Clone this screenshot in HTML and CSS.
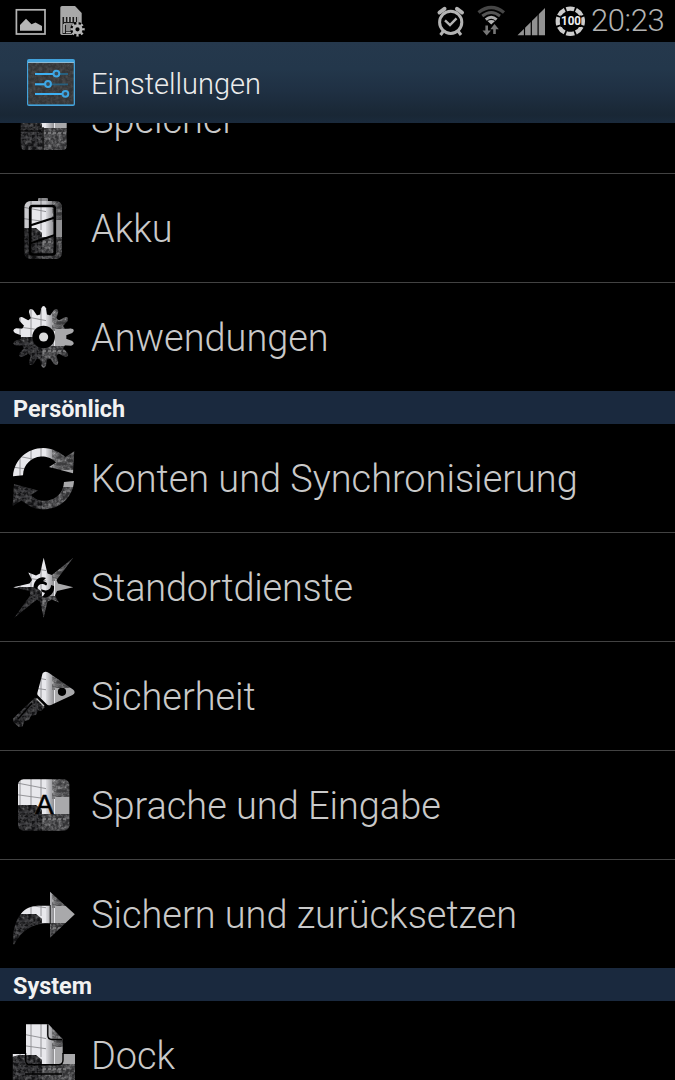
FILE: index.html
```html
<!DOCTYPE html>
<html lang="de">
<head>
    <meta charset="UTF-8">
    <meta name="viewport" content="width=device-width, initial-scale=1.0">
    <title>Einstellungen</title>
    <link rel="stylesheet" href="styles.css">
</head>
<body>
    <!-- Shared photo texture and the icon masks -->
    <svg class="defs" width="0" height="0" aria-hidden="true">
        <defs>
            <filter id="grain" x="0" y="0" width="100%" height="100%" color-interpolation-filters="sRGB">
                <feTurbulence type="fractalNoise" baseFrequency="0.3" numOctaves="3" seed="4" result="noise"/>
                <feColorMatrix in="noise" type="matrix" values="1.8 0 0 0 -0.62  1.8 0 0 0 -0.62  1.8 0 0 0 -0.62  0 0 0 0 0.35" result="gray"/>
                <feComposite in="gray" in2="SourceGraphic" operator="in" result="cut"/>
                <feMerge>
                    <feMergeNode in="SourceGraphic"/>
                    <feMergeNode in="cut"/>
                </feMerge>
            </filter>
            <linearGradient id="wall" x1="0" x2="1" y1="0" y2="0">
                <stop offset="0" stop-color="#a0a0a3"/>
                <stop offset="0.25" stop-color="#636366"/>
                <stop offset="1" stop-color="#4c4c4e"/>
            </linearGradient>
            <linearGradient id="pane" x1="0" x2="1" y1="0" y2="0">
                <stop offset="0" stop-color="#dcdce0"/>
                <stop offset="1" stop-color="#8e8e91"/>
            </linearGradient>
            <g id="photo">
                <rect width="64" height="64" fill="#e8e8ec"/>
                <path d="M8 0V34M19 0V34M29 0V34M0 9L36 16M0 21L36 26" stroke="#8b8b8f" stroke-width="0.9" fill="none"/>
                <rect x="34" width="8" height="44" fill="url(#pane)"/>
                <g filter="url(#grain)">
                    <rect x="40" width="24" height="26" fill="url(#wall)"/>
                    <rect x="26" y="41" width="38" height="23" fill="#4e4e50"/>
                    <path d="M0 34L7 32H24L30 37V64H0Z" fill="#1c1d1f"/>
                </g>
                <rect x="43" y="24" width="21" height="17" fill="#a9a9ab"/>
                <path d="M3 39H20M3 45H20M3 51H20M24 38V60" stroke="#47474b" stroke-width="1"/>
                <path d="M31 46H54" stroke="#858587" stroke-width="1.4" stroke-dasharray="3 2"/>
            </g>
            <mask id="m-storage" maskUnits="userSpaceOnUse" x="0" y="0" width="64" height="64">
                <rect x="8.7" y="8" width="46" height="55" rx="4" fill="#fff"/>
                <path d="M31 40V64M8 44H29" stroke="#000" stroke-width="1.2"/>
            </mask>
            <mask id="m-battery" maskUnits="userSpaceOnUse" x="0" y="0" width="64" height="64">
                <rect x="26" y="2" width="10" height="5" rx="1" fill="#999"/>
                <rect x="12.4" y="5" width="37.6" height="58" rx="6" fill="#ddd"/>
                <rect x="18.2" y="10" width="24.6" height="48.5" rx="2.5" fill="#fff" stroke="#000" stroke-width="2.7"/>
                <path d="M18 29.5L43 21.5M18 47.5L43 39" stroke="#000" stroke-width="2.3"/>
            </mask>
            <mask id="m-gear" maskUnits="userSpaceOnUse" x="0" y="0" width="64" height="64">
                <g fill="#fff">
                    <circle cx="31.6" cy="32" r="22.8"/>
                    <path id="tooth" d="M28 11L29.2 3.2Q31.6 -1 34 3.2L35.2 11Z"/>
                    <use href="#tooth" transform="rotate(25.71 31.6 32)"/>
                    <use href="#tooth" transform="rotate(51.43 31.6 32)"/>
                    <use href="#tooth" transform="rotate(77.14 31.6 32)"/>
                    <use href="#tooth" transform="rotate(102.86 31.6 32)"/>
                    <use href="#tooth" transform="rotate(128.57 31.6 32)"/>
                    <use href="#tooth" transform="rotate(154.29 31.6 32)"/>
                    <use href="#tooth" transform="rotate(180 31.6 32)"/>
                    <use href="#tooth" transform="rotate(205.71 31.6 32)"/>
                    <use href="#tooth" transform="rotate(231.43 31.6 32)"/>
                    <use href="#tooth" transform="rotate(257.14 31.6 32)"/>
                    <use href="#tooth" transform="rotate(282.86 31.6 32)"/>
                    <use href="#tooth" transform="rotate(308.57 31.6 32)"/>
                    <use href="#tooth" transform="rotate(334.29 31.6 32)"/>
                </g>
                <circle cx="31.6" cy="32" r="11.3" fill="#000"/>
            </mask>
            <mask id="m-sync" maskUnits="userSpaceOnUse" x="0" y="0" width="64" height="64">
                <path id="sync-arrow" d="M1 30.3C2 14 15 2 31.3 2C40 2 47.5 6 53.5 11L62.3 5.3L61 27.3L37 21L44 16.5C39 11.5 34 10.4 29 10.6C19 11.5 11.5 18.5 11 29.3Z" fill="#fff"/>
                <use href="#sync-arrow" transform="rotate(180 31.5 32.7)"/>
            </mask>
            <mask id="m-compass" maskUnits="userSpaceOnUse" x="0" y="0" width="64" height="64">
                <path d="M31.7 2.7L35.5 18.5L40 20L61.3 2.7L44.5 25L46 28.5L61.3 32.3L45 36L43 40.5L46.8 47.5L40 44.5L35.5 46.5L31.7 62.7L28 46.5L25 44.5L2.3 62.7L18.5 40L17.5 36L1.3 32.3L17.5 28.5L20 25L16.3 17.5L24 20.5L28 18.5Z" fill="#fff"/>
                <circle cx="31.7" cy="32" r="13" fill="#fff"/>
                <path d="M21.5 32C22 24 29 20.5 34 23L31 26C35 27 36 29 34 30.5C29 27 25 30 25.5 35ZM42 31C43 39 36 44 30.5 42L33 38C30 37 28.5 36 29.5 34C34 37 39 35 39 30Z" fill="#000"/>
            </mask>
            <mask id="m-key" maskUnits="userSpaceOnUse" x="0" y="0" width="64" height="64">
                <path d="M30.5 9.5Q32.5 6.5 37 9L61 25.5Q64.5 28.5 60.5 31L38.5 41.3Q36.5 42.3 35 40.5L26 31.5Q25 30.4 25.4 28.8Z" fill="#fff"/>
                <circle cx="50" cy="27.8" r="4.1" fill="#000"/>
                <path d="M23 33.5L32.8 43L29 47L26 46.5L24 51L19 51.5L17 56L12.5 57L10.5 62.5L6.5 63L1 57.5V54.5Z" fill="#fff"/>
            </mask>
            <mask id="m-lang" maskUnits="userSpaceOnUse" x="0" y="0" width="64" height="64">
                <rect x="6" y="6.3" width="51.4" height="51.4" rx="5.5" fill="#fff"/>
            </mask>
            <mask id="m-reset" maskUnits="userSpaceOnUse" x="0" y="0" width="64" height="64">
                <path d="M38 9.7L62.8 32.3L38 55.8V41.5C20 41 10 48 2.2 62.5L1.2 62V52C4 34 12 24 26 23.7H38Z" fill="#fff"/>
                <path d="M38.2 23V42" stroke="#000" stroke-width="0.9"/>
            </mask>
            <mask id="m-dock" maskUnits="userSpaceOnUse" x="0" y="0" width="64" height="64">
                <rect x="0.8" y="31" width="62.2" height="33" fill="#fff"/>
                <path d="M14 1.3H36.5L50.7 16V38Q50.7 41.5 47 41.5H17.5Q14 41.5 14 38Z" fill="#fff"/>
                <path d="M13.6 30V37Q13.6 41.8 18 41.8H46.5Q51 41.8 51 37V30M35.8 1.3V12Q35.8 16.5 40 16.5H50M13 51H50" fill="none" stroke="#000" stroke-width="1.4"/>
            </mask>
        </defs>
    </svg>

    <!-- Status bar -->
    <div class="status-bar">
        <svg class="status-icons" width="90" height="42" viewBox="0 0 90 42">
            <rect x="16.4" y="9.8" width="28.6" height="24.2" fill="none" stroke="#b5b5b5" stroke-width="1.7"/>
            <path d="M20 30.7V25L26 18.7L31.5 24.2L35.5 22.5L42 26V30.7Z" fill="#b5b5b5"/>
            <path d="M62 6H75L81.7 13V35H62Q60.3 35 60.3 33.3V7.7Q60.3 6 62 6Z" fill="#a8a8a8"/>
            <path d="M62.5 17H79V34H62.5Z" fill="#1a1a1a"/>
            <path d="M65 17V22M68.3 17V22M71.6 17V22M75 17V22M78 17V22M64 24V33M64 24H79M66 32.5H72" stroke="#b5b5b5" stroke-width="1.7"/>
            <path d="M66 25H73V31H66Z" fill="#8c8c8c"/>
            <circle cx="77.5" cy="29.3" r="7.4" fill="#000"/>
            <circle cx="77.5" cy="29.3" r="3.6" fill="none" stroke="#b5b5b5" stroke-width="3"/>
            <circle cx="77.5" cy="29.3" r="5.8" fill="none" stroke="#b5b5b5" stroke-width="2.8" pathLength="16" stroke-dasharray="1 1" stroke-dashoffset="0.5"/>
        </svg>
        <div class="status-right">
            <svg width="156" height="42" viewBox="435 0 156 42">
                <circle cx="450.7" cy="22.3" r="11.1" fill="none" stroke="#b3b3b3" stroke-width="3"/>
                <path d="M445 20.3L450 25L456.5 18.3" fill="none" stroke="#b3b3b3" stroke-width="2.4"/>
                <path d="M439.5 12.5L444.5 8.8M462 12.5L457 8.8" stroke="#b3b3b3" stroke-width="4" stroke-linecap="round"/>
                <path d="M443.5 31L440.5 35M458 31L461 35" stroke="#b3b3b3" stroke-width="3"/>
                <path d="M478.5 12.5Q491.2 2.5 504 12.5" fill="none" stroke="#464646" stroke-width="3.3"/>
                <path d="M482.3 16Q491.2 9 500 16" fill="none" stroke="#555" stroke-width="3"/>
                <path d="M485.8 19.6Q491.2 15 496.6 19.6" fill="none" stroke="#aaa" stroke-width="3"/>
                <path d="M487.5 21Q491.2 18.8 495 21L491.2 24.5Z" fill="#b5b5b5"/>
                <path d="M486.7 25.5V32M494.5 34V28" stroke="#777" stroke-width="2.6"/>
                <path d="M482.5 30.5H491L486.7 35.5ZM490.3 29.3H498.8L494.5 24Z" fill="#777"/>
                <path d="M517.5 35.3L545 8V35.3Z" fill="#929292"/>
                <path d="M524.5 26V36M531.3 20V36M538.1 13V36" stroke="#000" stroke-width="1.2"/>
                <circle cx="570.3" cy="21.2" r="12.6" fill="none" stroke="#ccc" stroke-width="4.2" pathLength="16" stroke-dasharray="1.65 0.35" stroke-dashoffset="0.82"/>
                <rect x="560.5" y="15.5" width="20.8" height="11.5" fill="#000"/>
                <text class="battery-level" x="571" y="25.3" text-anchor="middle" textLength="20" lengthAdjust="spacingAndGlyphs">100</text>
            </svg>
            <span class="clock">20:23</span>
        </div>
    </div>

    <!-- Title bar -->
    <div class="header">
        <svg class="header-icon" width="50" height="50" viewBox="0 0 50 50">
            <rect x="1" y="1" width="48" height="47" rx="2" fill="#43a3dc"/>
            <rect x="2.2" y="5" width="45.4" height="41.3" fill="#3b3c3e"/>
            <rect x="2.2" y="5" width="45.4" height="41.3" fill="#3b3c3e" filter="url(#grain)" opacity="0.3"/>
            <path d="M2 4.5H48" stroke="#a3c0cf" stroke-width="0.8"/>
            <path d="M9 16H42M9 26.3H42" stroke="#28607f" stroke-width="1.8"/>
            <path d="M9 16H27M9 26.3H19M9 36H36" stroke="#3db0f2" stroke-width="2"/>
            <g fill="#3b4b55" stroke="#3ea6e4" stroke-width="2">
                <circle cx="30.4" cy="15.6" r="2.9"/>
                <circle cx="22" cy="26" r="2.9"/>
                <circle cx="39.4" cy="35.8" r="2.9"/>
            </g>
        </svg>
        <h1 class="header-title">Einstellungen</h1>
    </div>

    <!-- Settings list, scrolled a bit under the title bar -->
    <div class="list">
        <div class="list-content">
            <div class="row">
                <svg class="icon" viewBox="0 0 64 64"><use href="#photo" mask="url(#m-storage)"/></svg>
                <span class="label">Speicher</span>
            </div>
            <div class="row">
                <svg class="icon" viewBox="0 0 64 64"><use href="#photo" mask="url(#m-battery)"/></svg>
                <span class="label">Akku</span>
            </div>
            <div class="row last">
                <svg class="icon" viewBox="0 0 64 64">
                    <use href="#photo" mask="url(#m-gear)"/>
                    <circle cx="31.6" cy="32" r="4.6" fill="#dcdcdc"/>
                </svg>
                <span class="label">Anwendungen</span>
            </div>

            <div class="section">Persönlich</div>
            <div class="row">
                <svg class="icon" viewBox="0 0 64 64"><use href="#photo" mask="url(#m-sync)"/></svg>
                <span class="label">Konten und Synchronisierung</span>
            </div>
            <div class="row">
                <svg class="icon" viewBox="0 0 64 64"><use href="#photo" mask="url(#m-compass)"/></svg>
                <span class="label tight">Standortdienste</span>
            </div>
            <div class="row">
                <svg class="icon" viewBox="0 0 64 64">
                    <use href="#photo" mask="url(#m-key)"/>
                    <path d="M24.5 34.5L32 42" stroke="#c4c4c4" stroke-width="1.2"/>
                    <path d="M20 39L6 55" stroke="#000" stroke-width="1.3"/>
                </svg>
                <span class="label">Sicherheit</span>
            </div>
            <div class="row">
                <svg class="icon" viewBox="0 0 64 64">
                    <use href="#photo" mask="url(#m-lang)"/>
                    <text class="letter" x="32.5" y="41" text-anchor="middle">A</text>
                </svg>
                <span class="label">Sprache und Eingabe</span>
            </div>
            <div class="row last">
                <svg class="icon" viewBox="0 0 64 64"><use href="#photo" mask="url(#m-reset)"/></svg>
                <span class="label">Sichern und zurücksetzen</span>
            </div>

            <div class="section">System</div>
            <div class="row">
                <svg class="icon" viewBox="0 0 64 64"><use href="#photo" mask="url(#m-dock)"/></svg>
                <span class="label">Dock</span>
            </div>
        </div>
    </div>
</body>
</html>
```
FILE: styles.css
```css
* {
    margin: 0;
    padding: 0;
    box-sizing: border-box;
}

body {
    display: flex;
    flex-direction: column;
    height: 100vh;
    overflow: hidden;
    background-color: #000;
    color: #c9c9c9;
    font-family: Roboto, "Liberation Sans", sans-serif;
    font-weight: 300;
}

svg {
    display: block;
    flex-shrink: 0;
}

.defs {
    position: absolute;
}

/* Status bar */
.status-bar {
    display: flex;
    justify-content: space-between;
    height: 42px;
    flex-shrink: 0;
}

.status-right {
    display: flex;
    padding-right: 9px;
}

.clock {
    width: 75px;
    font-size: 31px;
    line-height: 42px;
    letter-spacing: -0.4px;
    color: #b3b3b3;
    white-space: nowrap;
}

.battery-level {
    font-size: 12px;
    font-weight: 700;
    fill: #eee;
}

/* Title bar */
.header {
    display: flex;
    align-items: center;
    gap: 15px;
    height: 81px;
    flex-shrink: 0;
    padding-left: 26px;
    background: linear-gradient(#25384c, #23374b 33%, #1f3043 60%, #192735 90%, #1a2a3c);
}

.header-title {
    font-size: 29px;
    font-weight: 300;
    color: #ececec;
    padding-top: 2px;
}

/* List */
.list {
    flex: 1;
    overflow: hidden;
}

.list-content {
    margin-top: -58px;
}

.row {
    display: flex;
    align-items: center;
    gap: 15px;
    height: 109px;
    padding-left: 12px;
    border-bottom: 1px solid #424242;
    font-size: 37.9px;
    white-space: nowrap;
}

.row.last {
    height: 108px;
    border-bottom: none;
}

.label {
    padding-top: 2px;
}

.label.tight {
    letter-spacing: -0.2px;
}

.icon {
    width: 64px;
    height: 64px;
}

.letter {
    font-family: "Liberation Sans", sans-serif;
    font-size: 27px;
    font-weight: 400;
    fill: #000;
    stroke: #000;
    stroke-width: 0.6;
}

.section {
    height: 33px;
    padding-left: 13px;
    background-color: #1a293e;
    color: #f2f2f2;
    font-size: 23.4px;
    font-weight: 700;
    line-height: 36px;
}
```
